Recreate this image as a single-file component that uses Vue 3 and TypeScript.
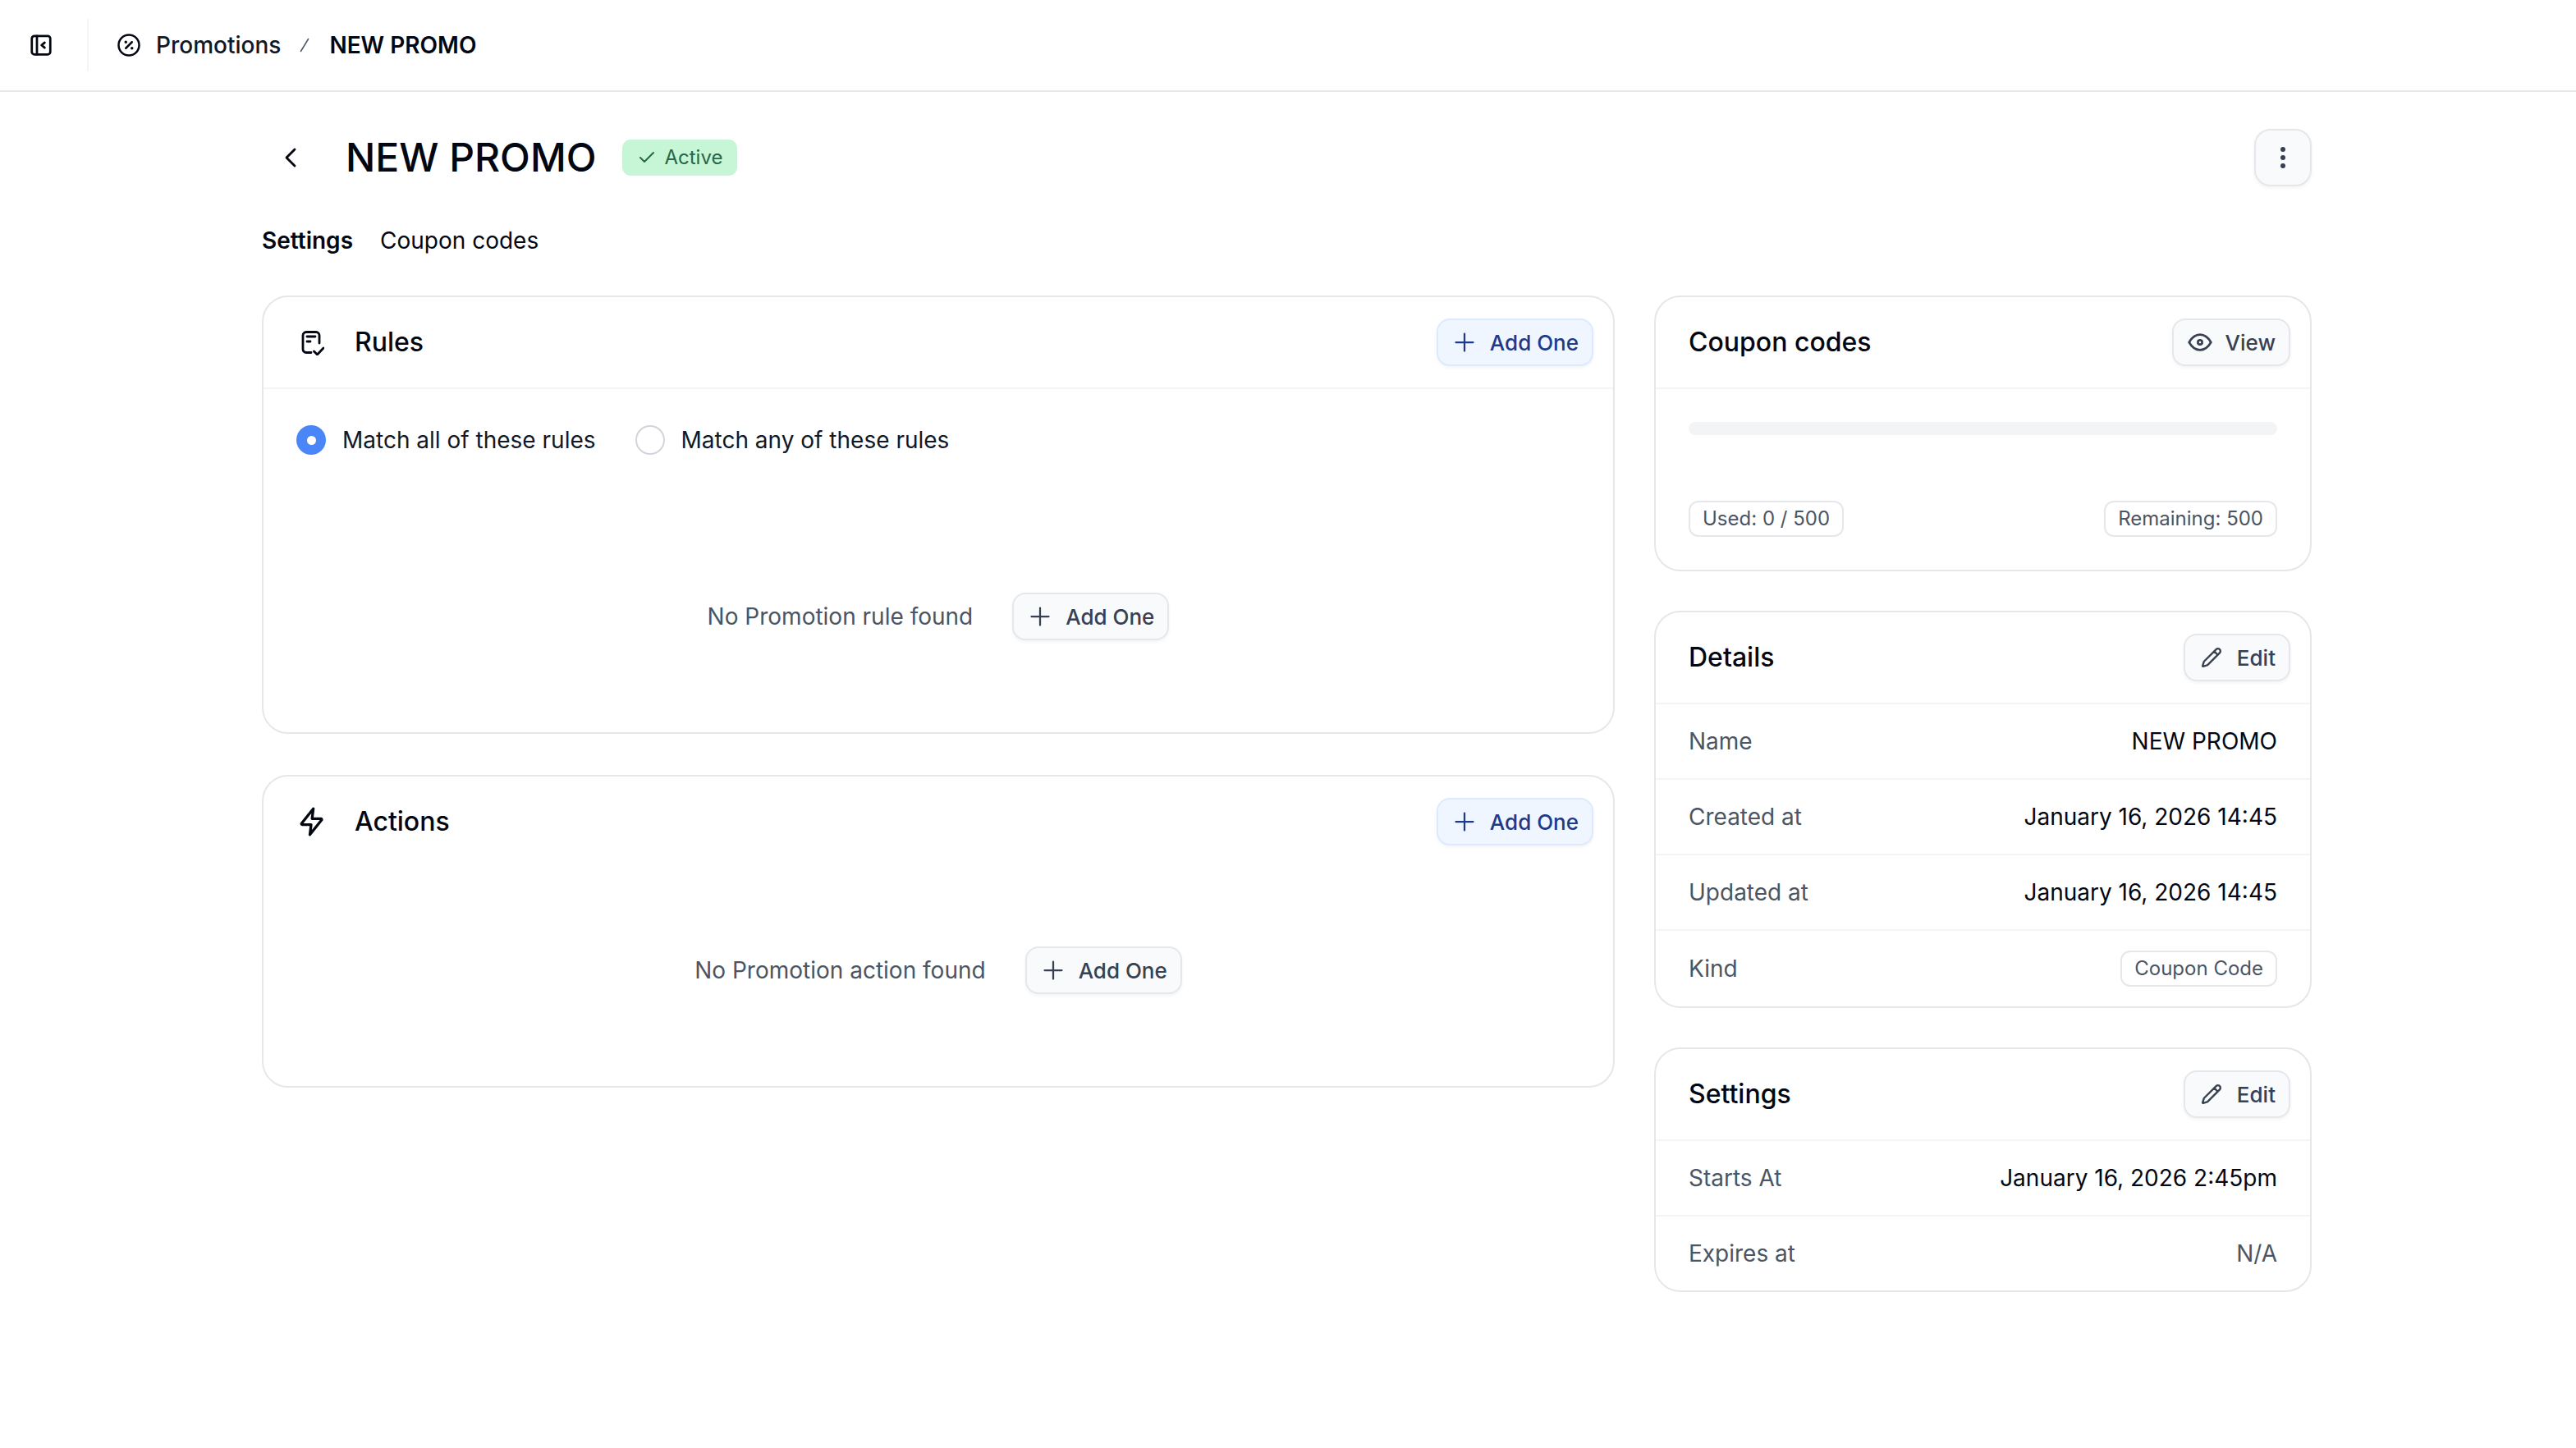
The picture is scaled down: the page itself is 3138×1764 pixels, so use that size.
<script setup lang="ts">
const detailRows = [
  { label: 'Name', value: 'NEW PROMO' },
  { label: 'Created at', value: 'January 16, 2026 14:45' },
  { label: 'Updated at', value: 'January 16, 2026 14:45' },
];
const plus = 'M5 12h14M12 5v14';
const pencil =
  'M21.174 6.812a1 1 0 0 0-3.986-3.987L3.842 16.174a2 2 0 0 0-.5.83l-1.321 4.352a.5.5 0 0 0 .623.622l4.353-1.32a2 2 0 0 0 .83-.497zM15 5l4 4';
</script>

<template>
  <div class="page">
    <header class="topbar">
      <svg class="ic-side" viewBox="0 0 24 24">
        <rect x="3" y="3" width="18" height="18" rx="2.5" />
        <path d="M8 3v18M15.5 9.5l-3 2.5 3 2.5" />
      </svg>
      <div class="topbar-sep" />
      <svg class="ic-percent" viewBox="0 0 24 24">
        <circle cx="12" cy="12" r="10" />
        <path d="M15 9l-6 6" />
        <circle class="percent-dot" cx="9" cy="9" r="0.9" />
        <circle class="percent-dot" cx="15" cy="15" r="0.9" />
      </svg>
      <span class="crumb">Promotions</span>
      <svg class="ic-slash" viewBox="0 0 24 24"><path d="M17.5 3L6.5 21" /></svg>
      <span class="crumb crumb-current">NEW PROMO</span>
    </header>

    <main class="content">
      <div class="title-row">
        <svg class="ic-back" viewBox="0 0 24 24"><path d="M15 18l-6-6 6-6" /></svg>
        <h1 class="title">NEW PROMO</h1>
        <span class="badge">
          <svg class="ic-check" viewBox="0 0 24 24"><path d="M20 6L9 17l-5-5" /></svg>
          Active
        </span>
        <button class="more">
          <span class="dot" /><span class="dot" /><span class="dot" />
        </button>
      </div>

      <nav class="tabs">
        <span class="tab tab-on">Settings</span>
        <span class="tab">Coupon codes</span>
      </nav>

      <div class="columns">
        <div class="col col-left">
          <section class="card">
            <div class="card-head">
              <div class="head-title">
                <svg class="ic-head ic-rules" viewBox="0 0 32 32">
                  <path d="M16 28.5h-6a4 4 0 0 1-4-4v-17a4 4 0 0 1 4-4h12a4 4 0 0 1 4 4V17M11 9h10M11 15h4M19.5 27l4 4 7.5-8" />
                </svg>
                <h2>Rules</h2>
              </div>
              <button class="btn btn-blue">
                <span class="btn-icon"><svg class="ic-plus" viewBox="0 0 24 24"><path :d="plus" /></svg></span>
                Add One
              </button>
            </div>
            <div class="radios">
              <label class="radio"><span class="circle circle-on"><span class="circle-dot" /></span>Match all of these rules</label>
              <label class="radio"><span class="circle" />Match any of these rules</label>
            </div>
            <div class="empty">
              <span>No Promotion rule found</span>
              <button class="btn">
                <span class="btn-icon"><svg class="ic-plus" viewBox="0 0 24 24"><path :d="plus" /></svg></span>
                Add One
              </button>
            </div>
          </section>

          <section class="card">
            <div class="card-head card-head-plain">
              <div class="head-title">
                <span class="ic-head">
                  <svg class="ic-bolt" viewBox="0 0 24 24">
                    <path d="M13 2.5 4.5 13.2a.6.6 0 0 0 .5 1h6.4L10.5 21.5 19 10.8a.6.6 0 0 0-.5-1h-6.4z" />
                  </svg>
                </span>
                <h2>Actions</h2>
              </div>
              <button class="btn btn-blue">
                <span class="btn-icon"><svg class="ic-plus" viewBox="0 0 24 24"><path :d="plus" /></svg></span>
                Add One
              </button>
            </div>
            <div class="empty">
              <span>No Promotion action found</span>
              <button class="btn">
                <span class="btn-icon"><svg class="ic-plus" viewBox="0 0 24 24"><path :d="plus" /></svg></span>
                Add One
              </button>
            </div>
          </section>
        </div>

        <div class="col">
          <section class="card">
            <div class="card-head">
              <h2>Coupon codes</h2>
              <button class="btn">
                <span class="btn-icon">
                  <svg class="ic-eye" viewBox="0 0 24 24">
                    <circle cx="12" cy="12" r="2" />
                    <path d="M22 12c-2.667 4.667-6 7-10 7s-7.333-2.333-10-7c2.667-4.667 6-7 10-7s7.333 2.333 10 7" />
                  </svg>
                </span>
                View
              </button>
            </div>
            <div class="usage">
              <div class="progress" />
              <div class="usage-pills">
                <span class="pill">Used: 0 / 500</span>
                <span class="pill">Remaining: 500</span>
              </div>
            </div>
          </section>

          <section class="card">
            <div class="card-head">
              <h2>Details</h2>
              <button class="btn">
                <span class="btn-icon"><svg class="ic-pen" viewBox="0 0 24 24"><path :d="pencil" /></svg></span>
                Edit
              </button>
            </div>
            <div v-for="row in detailRows" :key="row.label" class="row">
              <span class="row-label">{{ row.label }}</span>
              <span class="row-value">{{ row.value }}</span>
            </div>
            <div class="row">
              <span class="row-label">Kind</span>
              <span class="pill">Coupon Code</span>
            </div>
          </section>

          <section class="card">
            <div class="card-head">
              <h2>Settings</h2>
              <button class="btn">
                <span class="btn-icon"><svg class="ic-pen" viewBox="0 0 24 24"><path :d="pencil" /></svg></span>
                Edit
              </button>
            </div>
            <div class="row">
              <span class="row-label">Starts At</span>
              <span class="row-value">January 16, 2026 2:45pm</span>
            </div>
            <div class="row">
              <span class="row-label">Expires at</span>
              <span class="row-label">N/A</span>
            </div>
          </section>
        </div>
      </div>
    </main>
  </div>
</template>

<style>
html,
body {
  margin: 0;
  background: #fff;
}
</style>

<style scoped>
.page {
  min-height: 1764px;
  font-family: Inter, 'Liberation Sans', sans-serif;
  font-size: 28px;
  line-height: 42px;
  color: #030712;
  background: #fff;
}
svg {
  display: block;
  flex: none;
  fill: none;
  stroke: currentColor;
  stroke-width: 2;
  stroke-linecap: round;
  stroke-linejoin: round;
}
h1,
h2 {
  margin: 0;
  font-weight: 500;
}
h2 {
  font-size: 32px;
  line-height: 48px;
}

/* top bar */
.topbar {
  display: flex;
  align-items: center;
  height: 110px;
  padding-left: 35px;
  border-bottom: 2px solid #e5e7eb;
}
.ic-side {
  width: 30px;
  height: 30px;
  stroke-width: 2.2;
}
.topbar-sep {
  width: 2px;
  height: 64px;
  margin: 0 34px 0 41px;
  background: #f3f4f6;
}
.ic-percent {
  width: 30px;
  height: 30px;
  margin-right: 18px;
}
.percent-dot {
  fill: currentColor;
  stroke-width: 1;
}
.crumb {
  font-weight: 500;
}
.crumb:not(.crumb-current) {
  color: #111827;
}
.ic-slash {
  width: 20px;
  height: 20px;
  margin: 0 20px 0 19px;
  color: #4b5563;
  stroke-width: 1.8;
}
.crumb-current {
  font-weight: 600;
}

/* page head */
.content {
  padding: 45px 322px 60px 319px;
}
.title-row {
  display: flex;
  align-items: center;
  height: 70px;
}
.ic-back {
  width: 40px;
  height: 40px;
  margin: 0 47px 0 15px;
  stroke-width: 1.7;
}
.title {
  font-size: 48px;
  line-height: 70px;
}
.badge {
  display: flex;
  align-items: center;
  gap: 9px;
  height: 44px;
  margin-left: 32px;
  padding: 0 18px;
  border-radius: 10px;
  background: #c6f6d5;
  color: #276749;
  font-size: 24px;
}
.ic-check {
  width: 24px;
  height: 24px;
}
.more {
  display: flex;
  flex-direction: column;
  align-items: center;
  justify-content: center;
  gap: 4px;
  width: 70px;
  height: 70px;
  margin-left: auto;
  padding: 0;
  border: 2px solid #e5e7eb;
  border-radius: 20px;
  background: #f9fafb;
  box-shadow: 0 2px 4px rgba(0, 0, 0, 0.05);
}
.dot {
  width: 6px;
  height: 6px;
  border-radius: 50%;
  background: #374151;
}
.tabs {
  display: flex;
  gap: 33px;
  margin-top: 45px;
}
.tab-on {
  font-weight: 600;
}

/* columns */
.columns {
  display: grid;
  grid-template-columns: 1648px 801px;
  gap: 48px;
  align-items: start;
  margin-top: 46px;
}
.col {
  display: flex;
  flex-direction: column;
  gap: 48px;
}
.col-left {
  gap: 50px;
}
.card {
  border: 2px solid #e5e7eb;
  border-radius: 32px;
  background: #fff;
  overflow: hidden;
}
.card-head {
  display: flex;
  align-items: center;
  justify-content: space-between;
  padding: 26px 24px 26px 40px;
  border-bottom: 2px solid #f3f4f6;
}
.card-head-plain {
  border-bottom-color: transparent;
}
.head-title {
  display: flex;
  align-items: center;
  gap: 37px;
  margin-left: 2px;
}
.ic-head {
  display: flex;
  align-items: center;
  justify-content: center;
  width: 32px;
  height: 32px;
}
.ic-rules {
  stroke-width: 2.8;
}
.ic-bolt {
  width: 40px;
  height: 40px;
  margin-left: 2px;
  stroke-width: 2;
}
.btn {
  display: flex;
  align-items: center;
  gap: 13px;
  height: 58px;
  padding: 0 16px 0 14px;
  border: 2px solid #e5e7eb;
  border-radius: 16px;
  background: #f9fafb;
  box-shadow: 0 2px 4px rgba(0, 0, 0, 0.05);
  color: #374151;
  font-family: inherit;
  font-size: 26px;
  font-weight: 500;
}
.btn-blue {
  border-color: #dbeafe;
  background: #eff6ff;
  color: #1e3a8a;
}
.btn-icon {
  display: flex;
  align-items: center;
  justify-content: center;
  width: 36px;
  height: 36px;
}
.ic-plus {
  width: 36px;
  height: 36px;
  stroke-width: 1.5;
}
.ic-eye {
  width: 32px;
  height: 32px;
  stroke-width: 2;
}
.ic-pen {
  width: 26px;
  height: 26px;
  stroke-width: 2.2;
}

/* rules */
.radios {
  display: flex;
  gap: 48px;
  padding: 40px 40px 0;
  margin-bottom: 69px;
  color: #111827;
}
.radio {
  display: flex;
  align-items: center;
  gap: 20px;
  height: 44px;
}
.circle {
  display: flex;
  align-items: center;
  justify-content: center;
  box-sizing: border-box;
  width: 36px;
  height: 36px;
  border: 2px solid #d1d5db;
  border-radius: 50%;
}
.circle-on {
  border: none;
  background: #4a86f7;
}
.circle-dot {
  width: 11px;
  height: 11px;
  border-radius: 50%;
  background: #fff;
}
.empty {
  display: flex;
  align-items: center;
  justify-content: center;
  gap: 48px;
  padding: 95px 0 112px;
  color: #4b5563;
}

/* coupon usage */
.usage {
  padding: 40px;
}
.progress {
  height: 16px;
  border-radius: 8px;
  background: #f3f4f6;
}
.usage-pills {
  display: flex;
  justify-content: space-between;
  margin-top: 80px;
}
.pill {
  box-sizing: border-box;
  height: 44px;
  padding: 0 15px;
  border: 2px solid #e5e7eb;
  border-radius: 12px;
  color: #4b5563;
  font-size: 24px;
  line-height: 40px;
}

/* detail rows */
.row {
  display: flex;
  align-items: center;
  justify-content: space-between;
  min-height: 42px;
  padding: 24px 40px;
}
.row + .row {
  border-top: 2px solid #f3f4f6;
}
.row-label {
  color: #4b5563;
}
.row-value {
  color: #030712;
}
</style>
